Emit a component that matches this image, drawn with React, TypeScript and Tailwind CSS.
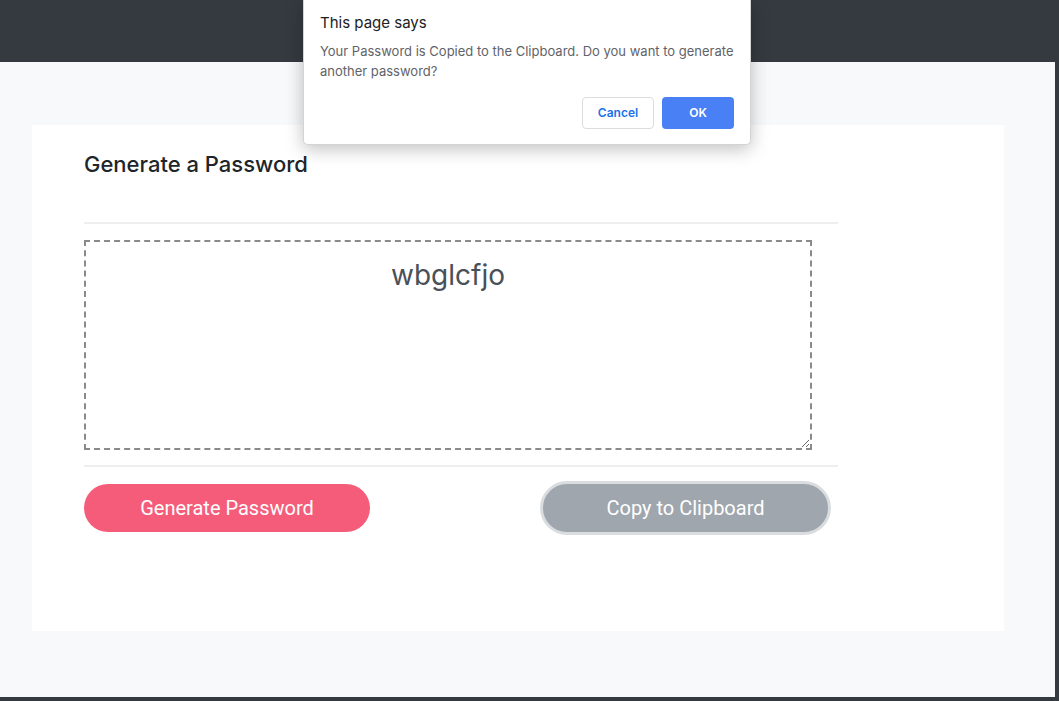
export default function App() {
  return (
    <div
      className="relative h-[701px] w-[1059px] overflow-hidden bg-[#343a40]"
      style={{ fontFamily: "Inter, 'Liberation Sans', sans-serif" }}
    >
      <div className="h-[62px]" />
      <div className="mr-[4px] h-[635px] bg-[#f8f9fa] px-[32px] pt-[63px]">
        <div className="h-[506px] w-[972px] bg-white pl-[52px] pt-[24px]">
          <h2 className="text-[22px] font-medium leading-[30px] text-[#212529]">
            Generate a Password
          </h2>
          <div className="w-[754px]">
            <hr className="mt-[43px] border-t-2 border-[#eeeeee]" />
            <textarea
              readOnly
              value="wbglcfjo"
              className="mt-[16px] block h-[210px] w-[728px] resize-y border-2 border-dashed border-[#8a8a8a] pt-[16px] text-center text-[28px] leading-[34px] text-[#495057] outline-none"
            />
            <hr className="mt-[15px] border-t-2 border-[#eeeeee]" />
            <div
              className="mt-[14px] flex items-center justify-between pr-[7px]"
              style={{ fontFamily: "Roboto, 'Liberation Sans', sans-serif" }}
            >
              <button className="h-[48px] w-[286px] rounded-full bg-[#f55c7a] text-[20px] text-white">
                Generate Password
              </button>
              <button className="h-[54px] w-[291px] rounded-full border-[3px] border-[#dadde0] bg-[#9fa6ad] text-[20px] text-white">
                Copy to Clipboard
              </button>
            </div>
          </div>
        </div>
      </div>

      <div className="absolute left-[303px] top-0 h-[145px] w-[448px] rounded-b-[5px] border border-t-0 border-[#d4d4d4] bg-white px-[16px] pt-[13px] shadow-[0_4px_18px_rgba(0,0,0,0.25)]">
        <div className="text-[15px] leading-[20px] text-[#202124]">This page says</div>
        <p className="mt-[8px] text-[13px] leading-[20px] text-[#5f6368]">
          Your Password is Copied to the Clipboard. Do you want to generate another password?
        </p>
        <div className="mt-[16px] flex justify-end gap-[8px]">
          <button className="h-[32px] w-[72px] rounded-[4px] border border-[#dadce0] bg-white text-[12px] font-semibold text-[#1a73e8]">
            Cancel
          </button>
          <button className="h-[32px] w-[72px] rounded-[4px] bg-[#4a80f5] text-[12px] font-semibold text-white">
            OK
          </button>
        </div>
      </div>
    </div>
  );
}
